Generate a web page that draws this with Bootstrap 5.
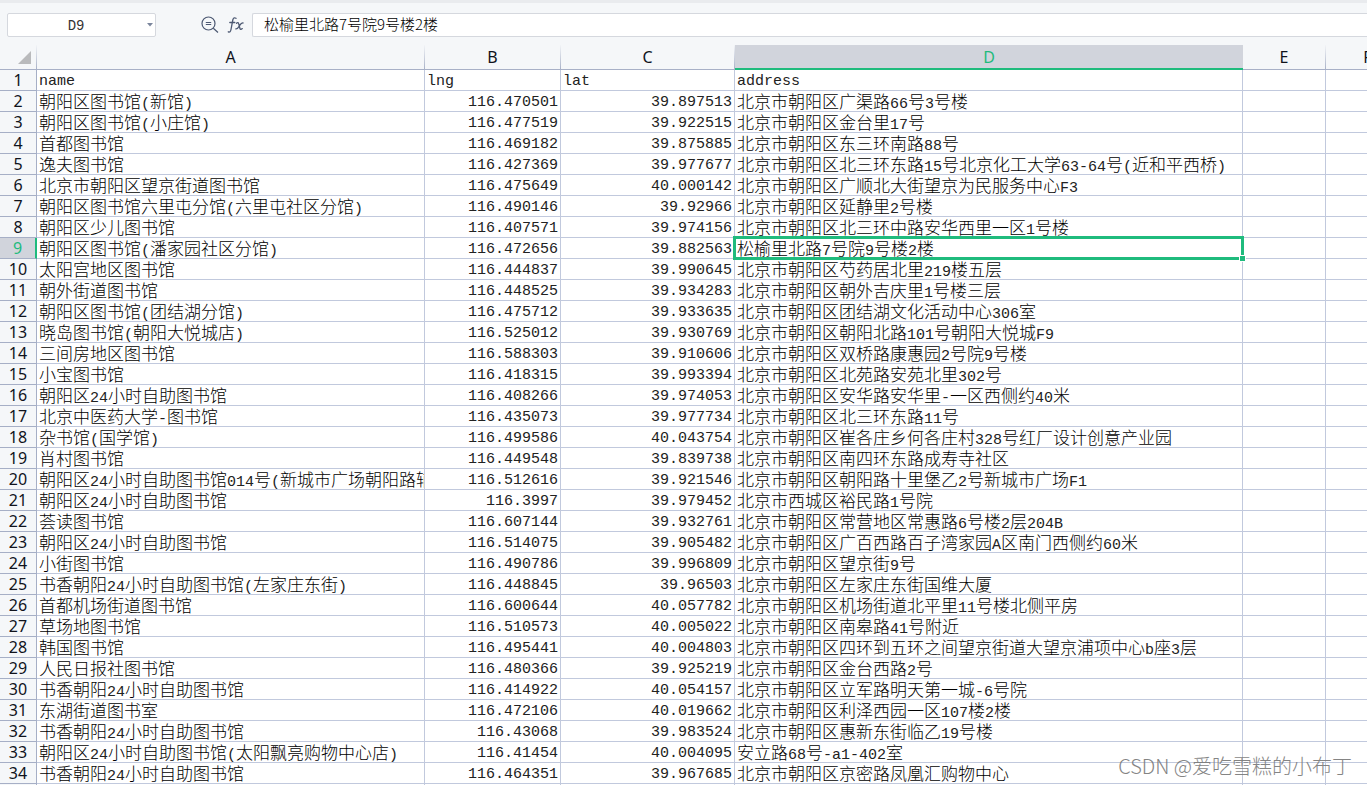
<!DOCTYPE html>
<html lang="zh-CN">
<head>
<meta charset="utf-8">
<meta name="viewport" content="width=device-width, initial-scale=1">
<title>图书馆</title>
<link href="https://cdn.jsdelivr.net/npm/bootstrap@5.3.0/dist/css/bootstrap.min.css" rel="stylesheet">
<style>
:root{--chrome:#f5f7f9;--grid:#c1c9dd;--edge:#a6afc6;--pick:#d1d4dc;--accent:#1fbb7d}
body{background:#fff;color:#000;font-family:"Noto Sans","Noto Sans CJK SC",sans-serif}
.formula-bar{height:45px;padding:10px 0 8px 7px;background:var(--chrome);border-top:3px solid #e9ebee}
.field{height:24px;background:#fff;border:1px solid #d5d8de;border-radius:2px}
.name-box{width:149px}
.name-box input{min-width:0;padding:2px 0 0;color:#333;font:14px "Liberation Mono",monospace;text-align:center}
.name-box button{width:14px;color:#7b869d}
.tools{width:96px;padding-left:44px;gap:7px;color:#4c5872}
.formula-input{padding:0 0 4px 11px;border-right:0;border-radius:2px 0 0 2px;color:#000;font:15px/18px "Noto Sans CJK SC",sans-serif;font-weight:300}
input:focus{outline:0}
.sheet{width:1410px;table-layout:fixed;border-collapse:separate;border-spacing:0;color:#000;border:0}
.sheet th,.sheet td{height:21px;padding:0 2px;line-height:20px;border:0 solid var(--grid);border-width:0 1px 1px 0;white-space:nowrap;overflow:hidden;vertical-align:middle;box-shadow:none}
.sheet td{font-size:17px;font-family:"Noto Sans CJK SC",sans-serif;font-weight:300;background:#fff;color:#000}
.sheet td span,.sheet td.num,.sheet .titles td{font-family:"Liberation Mono",monospace;font-size:15px;font-weight:400;color:#222}
.sheet td span{line-height:0}
.sheet .titles td,.sheet td.num{padding-top:4px;line-height:16px}
.sheet td.num{text-align:right}
.sheet th{font-weight:400;font-size:16px;text-align:center;background:var(--chrome);color:#10131c;border-color:var(--edge)}
.sheet thead th{height:25px;line-height:24px;border-image:linear-gradient(#f5f7f9,#a6afc6) 1}
.sheet thead th.picked{padding-top:1px;border-width:0 0 2px;border-image:none;border-color:var(--accent);line-height:22px;background:var(--pick);color:var(--accent)}
.sheet tbody th.picked{border-right:2px solid var(--accent);background:var(--pick);color:var(--accent)}
.sheet .corner svg{display:block;margin-left:auto;margin-right:3px}
.sheet td.active-cell{position:relative;overflow:visible}
.active-cell::before{content:"";position:absolute;inset:-2px;border:3px solid var(--accent)}
.active-cell::after{content:"";position:absolute;right:-4px;bottom:-4px;width:7px;height:7px;background:var(--accent);border:1px solid #fff}
.watermark{right:15px;bottom:5px;color:#777;opacity:.9;font:300 20px/28px "Noto Sans CJK SC",sans-serif}
</style>
</head>
<body class="vh-100 d-flex flex-column overflow-hidden position-relative">
<header class="formula-bar d-flex flex-shrink-0">
  <div class="field name-box d-flex">
    <input class="border-0 bg-transparent flex-grow-1" type="text" value="D9" aria-label="名称框">
    <button class="border-0 bg-transparent p-0 d-flex align-items-center" type="button" aria-label="展开名称"><svg class="mx-auto" width="6" height="4" viewBox="0 0 6 4"><path d="M0 0h6L3 3.5z" fill="currentColor"/></svg></button>
  </div>
  <div class="tools d-flex align-items-center">
    <button class="border-0 bg-transparent p-0 d-flex" type="button" aria-label="查找"><svg width="20" height="20" viewBox="0 0 20 20" fill="none" stroke="#4c5872" stroke-width="1.2"><circle cx="8.500" cy="8.500" r="6.500"/><path d="M5.800 7.500h5.400M5.800 9.500h5.400M13.300 13.300l4.700 4.200"/></svg></button>
    <button class="border-0 bg-transparent p-0 d-flex" type="button" aria-label="插入函数"><svg width="18" height="20" viewBox="0 0 18 20" fill="none" stroke="#4c5872" stroke-width="1.300" stroke-linecap="round"><path d="M9 3.300C7.200 2.200 6.200 3 5.800 5L4 14.500C3.600 16.700 2.700 17.500 1.300 16.800M2.800 7.500h5M9.500 8.300c1.200-1.200 2-.7 2.300.7l1 4c.3 1.500 1.200 1.700 2.500.6M16 8c-1.500-.4-2.300.8-3.700 3s-2 3.300-3.500 2.900"/></svg></button>
  </div>
  <input class="field formula-input flex-grow-1" type="text" value="松榆里北路7号院9号楼2楼" aria-label="编辑栏">
</header>
<main class="flex-grow-1 overflow-hidden">
<table class="table sheet m-0">
<colgroup><col style="width:37px"><col style="width:388px"><col style="width:136px"><col style="width:174px"><col style="width:508px"><col style="width:83px"><col></colgroup>
<thead><tr><th class="corner" aria-label="全选"><svg width="13" height="13" viewBox="0 0 13 13"><path d="M13 0v13H0z" fill="#b9babc"/></svg></th><th scope="col">A</th><th scope="col">B</th><th scope="col">C</th><th scope="col" class="picked">D</th><th scope="col">E</th><th scope="col">F</th></tr></thead>
<tbody>
<tr class="titles"><th scope="row">1</th><td>name</td><td>lng</td><td>lat</td><td>address</td><td></td><td></td></tr>
<tr><th scope="row">2</th><td>朝阳区图书馆<span>(</span>新馆<span>)</span></td><td class="num">116.470501</td><td class="num">39.897513</td><td>北京市朝阳区广渠路<span>66</span>号<span>3</span>号楼</td><td></td><td></td></tr>
<tr><th scope="row">3</th><td>朝阳区图书馆<span>(</span>小庄馆<span>)</span></td><td class="num">116.477519</td><td class="num">39.922515</td><td>北京市朝阳区金台里<span>17</span>号</td><td></td><td></td></tr>
<tr><th scope="row">4</th><td>首都图书馆</td><td class="num">116.469182</td><td class="num">39.875885</td><td>北京市朝阳区东三环南路<span>88</span>号</td><td></td><td></td></tr>
<tr><th scope="row">5</th><td>逸夫图书馆</td><td class="num">116.427369</td><td class="num">39.977677</td><td>北京市朝阳区北三环东路<span>15</span>号北京化工大学<span>63-64</span>号<span>(</span>近和平西桥<span>)</span></td><td></td><td></td></tr>
<tr><th scope="row">6</th><td>北京市朝阳区望京街道图书馆</td><td class="num">116.475649</td><td class="num">40.000142</td><td>北京市朝阳区广顺北大街望京为民服务中心<span>F3</span></td><td></td><td></td></tr>
<tr><th scope="row">7</th><td>朝阳区图书馆六里屯分馆<span>(</span>六里屯社区分馆<span>)</span></td><td class="num">116.490146</td><td class="num">39.92966</td><td>北京市朝阳区延静里<span>2</span>号楼</td><td></td><td></td></tr>
<tr><th scope="row">8</th><td>朝阳区少儿图书馆</td><td class="num">116.407571</td><td class="num">39.974156</td><td>北京市朝阳区北三环中路安华西里一区<span>1</span>号楼</td><td></td><td></td></tr>
<tr><th scope="row" class="picked">9</th><td>朝阳区图书馆<span>(</span>潘家园社区分馆<span>)</span></td><td class="num">116.472656</td><td class="num">39.882563</td><td class="active-cell">松榆里北路<span>7</span>号院<span>9</span>号楼<span>2</span>楼</td><td></td><td></td></tr>
<tr><th scope="row">10</th><td>太阳宫地区图书馆</td><td class="num">116.444837</td><td class="num">39.990645</td><td>北京市朝阳区芍药居北里<span>219</span>楼五层</td><td></td><td></td></tr>
<tr><th scope="row">11</th><td>朝外街道图书馆</td><td class="num">116.448525</td><td class="num">39.934283</td><td>北京市朝阳区朝外吉庆里<span>1</span>号楼三层</td><td></td><td></td></tr>
<tr><th scope="row">12</th><td>朝阳区图书馆<span>(</span>团结湖分馆<span>)</span></td><td class="num">116.475712</td><td class="num">39.933635</td><td>北京市朝阳区团结湖文化活动中心<span>306</span>室</td><td></td><td></td></tr>
<tr><th scope="row">13</th><td>晓岛图书馆<span>(</span>朝阳大悦城店<span>)</span></td><td class="num">116.525012</td><td class="num">39.930769</td><td>北京市朝阳区朝阳北路<span>101</span>号朝阳大悦城<span>F9</span></td><td></td><td></td></tr>
<tr><th scope="row">14</th><td>三间房地区图书馆</td><td class="num">116.588303</td><td class="num">39.910606</td><td>北京市朝阳区双桥路康惠园<span>2</span>号院<span>9</span>号楼</td><td></td><td></td></tr>
<tr><th scope="row">15</th><td>小宝图书馆</td><td class="num">116.418315</td><td class="num">39.993394</td><td>北京市朝阳区北苑路安苑北里<span>302</span>号</td><td></td><td></td></tr>
<tr><th scope="row">16</th><td>朝阳区<span>24</span>小时自助图书馆</td><td class="num">116.408266</td><td class="num">39.974053</td><td>北京市朝阳区安华路安华里<span>-</span>一区西侧约<span>40</span>米</td><td></td><td></td></tr>
<tr><th scope="row">17</th><td>北京中医药大学<span>-</span>图书馆</td><td class="num">116.435073</td><td class="num">39.977734</td><td>北京市朝阳区北三环东路<span>11</span>号</td><td></td><td></td></tr>
<tr><th scope="row">18</th><td>杂书馆<span>(</span>国学馆<span>)</span></td><td class="num">116.499586</td><td class="num">40.043754</td><td>北京市朝阳区崔各庄乡何各庄村<span>328</span>号红厂设计创意产业园</td><td></td><td></td></tr>
<tr><th scope="row">19</th><td>肖村图书馆</td><td class="num">116.449548</td><td class="num">39.839738</td><td>北京市朝阳区南四环东路成寿寺社区</td><td></td><td></td></tr>
<tr><th scope="row">20</th><td>朝阳区<span>24</span>小时自助图书馆<span>014</span>号<span>(</span>新城市广场朝阳路辅路<span>)</span></td><td class="num">116.512616</td><td class="num">39.921546</td><td>北京市朝阳区朝阳路十里堡乙<span>2</span>号新城市广场<span>F1</span></td><td></td><td></td></tr>
<tr><th scope="row">21</th><td>朝阳区<span>24</span>小时自助图书馆</td><td class="num">116.3997</td><td class="num">39.979452</td><td>北京市西城区裕民路<span>1</span>号院</td><td></td><td></td></tr>
<tr><th scope="row">22</th><td>荟读图书馆</td><td class="num">116.607144</td><td class="num">39.932761</td><td>北京市朝阳区常营地区常惠路<span>6</span>号楼<span>2</span>层<span>204B</span></td><td></td><td></td></tr>
<tr><th scope="row">23</th><td>朝阳区<span>24</span>小时自助图书馆</td><td class="num">116.514075</td><td class="num">39.905482</td><td>北京市朝阳区广百西路百子湾家园<span>A</span>区南门西侧约<span>60</span>米</td><td></td><td></td></tr>
<tr><th scope="row">24</th><td>小街图书馆</td><td class="num">116.490786</td><td class="num">39.996809</td><td>北京市朝阳区望京街<span>9</span>号</td><td></td><td></td></tr>
<tr><th scope="row">25</th><td>书香朝阳<span>24</span>小时自助图书馆<span>(</span>左家庄东街<span>)</span></td><td class="num">116.448845</td><td class="num">39.96503</td><td>北京市朝阳区左家庄东街国维大厦</td><td></td><td></td></tr>
<tr><th scope="row">26</th><td>首都机场街道图书馆</td><td class="num">116.600644</td><td class="num">40.057782</td><td>北京市朝阳区机场街道北平里<span>11</span>号楼北侧平房</td><td></td><td></td></tr>
<tr><th scope="row">27</th><td>草场地图书馆</td><td class="num">116.510573</td><td class="num">40.005022</td><td>北京市朝阳区南皋路<span>41</span>号附近</td><td></td><td></td></tr>
<tr><th scope="row">28</th><td>韩国图书馆</td><td class="num">116.495441</td><td class="num">40.004803</td><td>北京市朝阳区四环到五环之间望京街道大望京浦项中心<span>b</span>座<span>3</span>层</td><td></td><td></td></tr>
<tr><th scope="row">29</th><td>人民日报社图书馆</td><td class="num">116.480366</td><td class="num">39.925219</td><td>北京市朝阳区金台西路<span>2</span>号</td><td></td><td></td></tr>
<tr><th scope="row">30</th><td>书香朝阳<span>24</span>小时自助图书馆</td><td class="num">116.414922</td><td class="num">40.054157</td><td>北京市朝阳区立军路明天第一城<span>-6</span>号院</td><td></td><td></td></tr>
<tr><th scope="row">31</th><td>东湖街道图书室</td><td class="num">116.472106</td><td class="num">40.019662</td><td>北京市朝阳区利泽西园一区<span>107</span>楼<span>2</span>楼</td><td></td><td></td></tr>
<tr><th scope="row">32</th><td>书香朝阳<span>24</span>小时自助图书馆</td><td class="num">116.43068</td><td class="num">39.983524</td><td>北京市朝阳区惠新东街临乙<span>19</span>号楼</td><td></td><td></td></tr>
<tr><th scope="row">33</th><td>朝阳区<span>24</span>小时自助图书馆<span>(</span>太阳飘亮购物中心店<span>)</span></td><td class="num">116.41454</td><td class="num">40.004095</td><td>安立路<span>68</span>号<span>-a1-402</span>室</td><td></td><td></td></tr>
<tr><th scope="row">34</th><td>书香朝阳<span>24</span>小时自助图书馆</td><td class="num">116.464351</td><td class="num">39.967685</td><td>北京市朝阳区京密路凤凰汇购物中心</td><td></td><td></td></tr>
<tr><th></th><td></td><td></td><td></td><td></td><td></td><td></td></tr>
</tbody>
</table>
</main>
<div class="watermark position-absolute">CSDN @爱吃雪糕的小布丁</div>
<script src="https://cdn.jsdelivr.net/npm/bootstrap@5.3.0/dist/js/bootstrap.bundle.min.js"></script>
</body>
</html>
